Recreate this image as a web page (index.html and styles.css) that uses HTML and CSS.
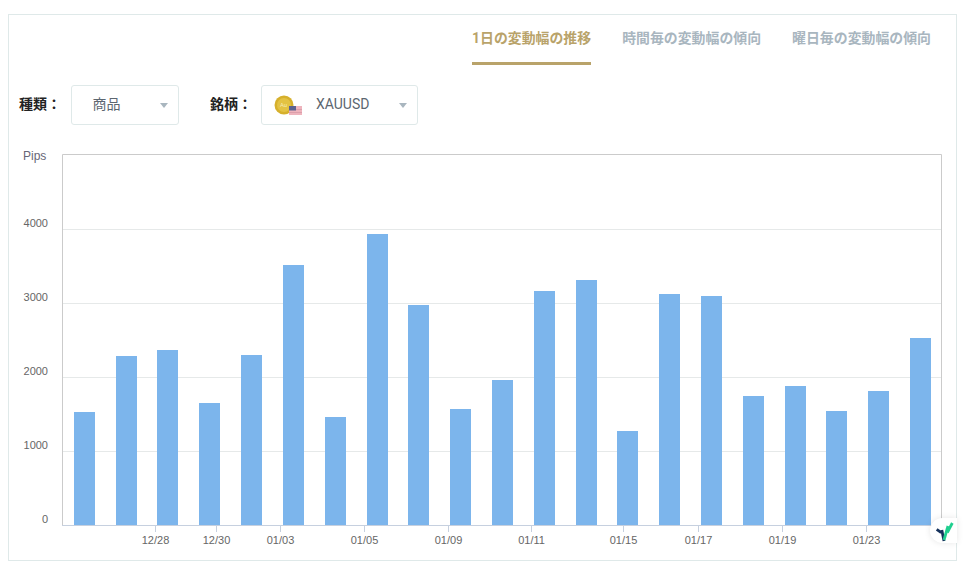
FILE: index.html
```html
<!DOCTYPE html>
<html lang="ja">
<head>
<meta charset="utf-8">
<title>変動幅</title>
<link rel="stylesheet" href="styles.css">
</head>
<body>
<main class="panel">
  <nav class="tabs">
    <a class="tab active">1日の変動幅の推移</a>
    <a class="tab">時間毎の変動幅の傾向</a>
    <a class="tab">曜日毎の変動幅の傾向</a>
  </nav>
  <div class="filters">
    <span class="label first">種類：</span>
    <div class="select kind"><span class="value">商品</span><i class="caret"></i></div>
    <span class="label second">銘柄：</span>
    <div class="select symbol">
      <svg class="flag" width="28" height="22" viewBox="0 0 28 22">
        <circle cx="10" cy="11" r="9.500" fill="#d6b02c"/>
        <circle cx="10" cy="11" r="7" fill="#e3c243"/>
        <text x="9.500" y="13" class="au">Au</text>
        <rect x="15" y="12" width="13" height="9" fill="#eeb4bd"/>
        <rect x="15" y="15" width="13" height="1" fill="#dc9fab"/>
        <rect x="15" y="18" width="13" height="1" fill="#dc9fab"/>
        <rect x="15" y="12" width="7" height="4.500" fill="#5a6290"/>
      </svg>
      <span class="value sym">XAUUSD</span><i class="caret"></i>
    </div>
  </div>
  <svg class="chart" width="953" height="423" viewBox="0 0 953 423">
    <g class="axis-y">
      <text x="15" y="18" class="pips">Pips</text>
      <text x="40" y="85">4000</text>
      <text x="40" y="159">3000</text>
      <text x="40" y="233">2000</text>
      <text x="40" y="307">1000</text>
      <text x="40" y="381">0</text>
    </g>
    <g class="grid">
      <line x1="54" x2="933" y1="87.500" y2="87.500"/>
      <line x1="54" x2="933" y1="161.500" y2="161.500"/>
      <line x1="54" x2="933" y1="235.500" y2="235.500"/>
      <line x1="54" x2="933" y1="309.500" y2="309.500"/>
    </g>
    <g class="bars">
      <rect x="66" y="270" width="21" height="113"/>
      <rect x="108" y="214" width="21" height="169"/>
      <rect x="149" y="208" width="21" height="175"/>
      <rect x="191" y="261" width="21" height="122"/>
      <rect x="233" y="213" width="21" height="170"/>
      <rect x="275" y="123" width="21" height="260"/>
      <rect x="317" y="275" width="21" height="108"/>
      <rect x="359" y="92" width="21" height="291"/>
      <rect x="400" y="163" width="21" height="220"/>
      <rect x="442" y="267" width="21" height="116"/>
      <rect x="484" y="238" width="21" height="145"/>
      <rect x="526" y="149" width="21" height="234"/>
      <rect x="568" y="138" width="21" height="245"/>
      <rect x="609" y="289" width="21" height="94"/>
      <rect x="651" y="152" width="21" height="231"/>
      <rect x="693" y="154" width="21" height="229"/>
      <rect x="735" y="254" width="21" height="129"/>
      <rect x="777" y="244" width="21" height="139"/>
      <rect x="818" y="269" width="21" height="114"/>
      <rect x="860" y="249" width="21" height="134"/>
      <rect x="902" y="196" width="21" height="187"/>
    </g>
    <path class="frame" d="M54.500 383V12.500H933.500V383"/>
    <line class="base" x1="54" x2="934" y1="383.500" y2="383.500"/>
    <g class="ticks">
      <line x1="147.500" x2="147.500" y1="384" y2="390"/>
      <line x1="208.500" x2="208.500" y1="384" y2="390"/>
      <line x1="272.500" x2="272.500" y1="384" y2="390"/>
      <line x1="356.500" x2="356.500" y1="384" y2="390"/>
      <line x1="440.500" x2="440.500" y1="384" y2="390"/>
      <line x1="523.500" x2="523.500" y1="384" y2="390"/>
      <line x1="615.500" x2="615.500" y1="384" y2="390"/>
      <line x1="690.500" x2="690.500" y1="384" y2="390"/>
      <line x1="774.500" x2="774.500" y1="384" y2="390"/>
      <line x1="858.500" x2="858.500" y1="384" y2="390"/>
    </g>
    <g class="axis-x">
      <text x="147.500" y="402">12/28</text>
      <text x="208.500" y="402">12/30</text>
      <text x="272.500" y="402">01/03</text>
      <text x="356.500" y="402">01/05</text>
      <text x="440.500" y="402">01/09</text>
      <text x="523.500" y="402">01/11</text>
      <text x="615.500" y="402">01/15</text>
      <text x="690.500" y="402">01/17</text>
      <text x="774.500" y="402">01/19</text>
      <text x="858.500" y="402">01/23</text>
    </g>
  </svg>
  <div class="badge">
    <svg width="27" height="25" viewBox="0 0 27 25">
      <path d="M6.700 11.300 11.300 14.700" class="mark-navy"/>
      <path d="M11.800 12 14 23" class="mark-navy"/>
      <path d="M14 22 18 8" class="mark-green"/>
      <path d="M17.300 14.700 22.300 5" class="mark-green"/>
    </svg>
  </div>
</main>
</body>
</html>
```
FILE: styles.css
```css
* { box-sizing: border-box; }
html, body { margin: 0; padding: 0; background: #fff; }
body {
  width: 971px;
  height: 570px;
  overflow: hidden;
  font-family: Roboto, "Noto Sans CJK JP", sans-serif;
}
.panel {
  position: relative;
  width: 949px;
  height: 547px;
  margin: 14px 0 0 8px;
  border: 1px solid #dfe9e9;
}
.tabs {
  display: flex;
  justify-content: flex-end;
  gap: 31px;
  padding-right: 25px;
  height: 50px;
}
.tab {
  height: 50px;
  padding-top: 13px;
  font-size: 13.900px;
  line-height: 20px;
  font-weight: 700;
  color: #a9b6bf;
}
.tab.active {
  color: #b9a36a;
  border-bottom: 3px solid #b9a36a;
}
.filters {
  display: flex;
  align-items: center;
  margin-top: 20px;
  height: 40px;
}
.label {
  font-size: 14px;
  font-weight: 700;
  color: #222;
  padding-bottom: 4px;
}
.label.first { margin-left: 10px; width: 52px; }
.label.second { margin-left: 31px; width: 51px; }
.select {
  position: relative;
  display: flex;
  align-items: center;
  height: 40px;
  border: 1px solid #dfe9e9;
  border-radius: 3px;
  font-size: 14px;
  color: #5c6670;
}
.kind { width: 108px; padding-left: 20.500px; }
.symbol { width: 157px; padding-left: 12px; }
.value { line-height: 20px; padding-bottom: 2px; }
.sym { margin-left: 14px; }
.flag { flex: none; }
.au {
  font-size: 6px;
  fill: #f6eab8;
  text-anchor: middle;
  font-family: Roboto, sans-serif;
}
.caret {
  position: absolute;
  right: 10px;
  top: 17px;
  border-style: solid;
  border-width: 5px 4px 0;
  border-color: #a9b6bf transparent transparent;
}
.chart {
  display: block;
  margin-top: 17px;
  margin-left: -1px;
}
.axis-y text, .axis-x text {
  font-family: "Liberation Sans", Arial, sans-serif;
  font-size: 11px;
  fill: #666;
}
.axis-y text { text-anchor: end; }
.axis-y .pips { text-anchor: start; font-size: 12px; fill: #667; }
.axis-x text { text-anchor: middle; }
.grid line { stroke: #e6e9e9; stroke-width: 1; }
.bars rect { fill: #7cb5ec; }
.frame { fill: none; stroke: #cbcbcb; stroke-width: 1; }
.base { stroke: #c6d0df; stroke-width: 1; }
.ticks line { stroke: #c6d0df; stroke-width: 1; }
.badge {
  position: absolute;
  right: -1px;
  top: 503px;
  width: 27px;
  height: 25px;
  display: flex;
  background: #fff;
  border-radius: 13px 0 0 13px;
  box-shadow: 0 0 6px rgba(0, 0, 0, .1);
}
.mark-navy { fill: none; stroke: #16325c; stroke-width: 2.800; }
.mark-green { fill: none; stroke: #1fcf8f; stroke-width: 2.800; }
```
